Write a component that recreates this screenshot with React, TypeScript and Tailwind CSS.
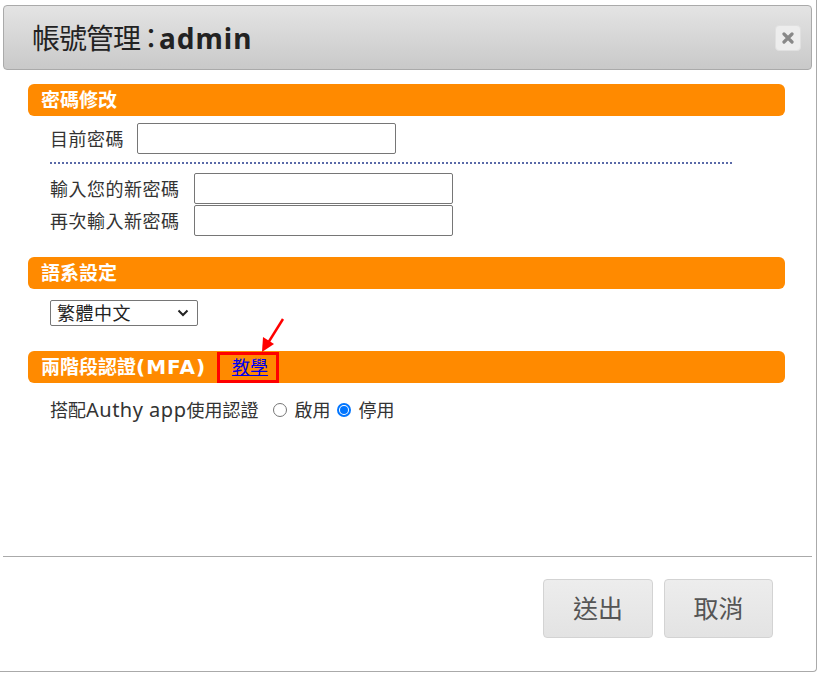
import React from "react";

const font = { fontFamily: '"Noto Sans", "Noto Sans CJK TC", sans-serif' };

function Bar({ children }: { children: React.ReactNode }) {
  return (
    <div className="flex h-[32px] w-[757px] items-center rounded-[6px] bg-[#ff8a00] pl-[13px] text-[19px] font-bold leading-none text-white">
      {children}
    </div>
  );
}

function Field() {
  return <div className="h-[31px] w-[259px] rounded-[2px] border border-[#767676] bg-white" />;
}

export default function App() {
  return (
    <div className="relative h-[673px] w-[818px] bg-white text-[#333]" style={font}>
      <div className="flex h-[672px] w-[817px] flex-col rounded-br-[4px] border-r border-b border-[#aaa]">
        {/* title bar */}
        <div className="ml-[3px] mt-[5px] flex h-[65px] w-[809px] items-center justify-between rounded-[4px] border border-[#aaa] bg-gradient-to-b from-[#e4e4e4] to-[#c9c9c9] pl-[28px] pr-[10px]">
          <div className="flex items-center text-[28px] leading-none text-[#222]">
            <span className="tracking-[-1px]">帳號管理</span>
            <span className="-ml-[3px] tracking-[-6px]">：</span>
            <span className="font-bold tracking-[1px]">admin</span>
          </div>
          <div className="flex h-[26px] w-[26px] items-center justify-center rounded-[4px] border border-[#e0e0e0] bg-[#ededed]">
            <svg width="12" height="12" viewBox="0 0 12 12">
              <path d="M2 2 L10 10 M10 2 L2 10" stroke="#888" strokeWidth="3.2" strokeLinecap="round" />
            </svg>
          </div>
        </div>

        {/* content */}
        <div className="flex h-[486px] flex-col pl-[28px] pt-[14px] text-[18px] leading-none">
          <Bar>密碼修改</Bar>
          <div className="mt-[7px] flex items-center pl-[22px]">
            <span className="w-[87px] tracking-[0.5px]">目前密碼</span>
            <Field />
          </div>
          <div className="ml-[22px] mt-[8px] h-[2px] w-[682px] border-t-2 border-dotted border-[#5a6aa8]" />
          <div className="mt-[9px] flex items-center pl-[22px]">
            <span className="w-[144px] tracking-[0.5px]">輸入您的新密碼</span>
            <Field />
          </div>
          <div className="mt-[1px] flex items-center pl-[22px]">
            <span className="w-[144px] tracking-[0.5px]">再次輸入新密碼</span>
            <Field />
          </div>

          <div className="mt-[21px]">
            <Bar>語系設定</Bar>
          </div>
          <div className="mt-[11px] pl-[22px]">
            <div className="flex h-[26px] w-[148px] items-center justify-between rounded-[2px] border border-[#767676] pl-[6px] pr-[8px] text-[#222]">
              <span className="tracking-[0.5px]">繁體中文</span>
              <svg width="12" height="8" viewBox="0 0 12 8">
                <path d="M1.5 1.5 L6 6 L10.5 1.5" stroke="#222" strokeWidth="2" fill="none" />
              </svg>
            </div>
          </div>

          <div className="mt-[25px]">
            <Bar>
              <span>兩階段認證</span>
              <span className="text-[20px] tracking-[1px]" style={{ fontFamily: '"DejaVu Sans", sans-serif' }}>
                (MFA)
              </span>
              <span className="ml-[11px] flex h-[31px] items-center border-[3px] border-[#ff0000] pl-[12px] pr-[8px] text-[18px] font-normal text-[#0000ee] underline">
                教學
              </span>
            </Bar>
          </div>
          <div className="mt-[17px] flex items-center pl-[22px]">
            <span>搭配</span>
            <span className="text-[20px] tracking-[0.5px]">Authy app</span>
            <span>使用認證</span>
            <span className="ml-[15px] inline-block h-[14px] w-[14px] rounded-full border border-[#767676] bg-white" />
            <span className="ml-[7px]">啟用</span>
            <span className="ml-[7px] flex h-[14px] w-[14px] items-center justify-center rounded-full border-[2px] border-[#0075ff] bg-white">
              <span className="h-[8px] w-[8px] rounded-full bg-[#0075ff]" />
            </span>
            <span className="ml-[7px]">停用</span>
          </div>
        </div>

        {/* footer */}
        <div className="ml-[3px] h-[1px] w-[809px] bg-[#aaa]" />
        <div className="flex justify-end gap-[11px] pr-[43px] pt-[22px]">
          <button className="h-[59px] w-[110px] rounded-[4px] border border-[#d3d3d3] bg-gradient-to-b from-[#ededed] to-[#e3e3e3] text-[25px] text-[#555]">
            送出
          </button>
          <button className="h-[59px] w-[109px] rounded-[4px] border border-[#d3d3d3] bg-gradient-to-b from-[#ededed] to-[#e3e3e3] text-[25px] text-[#555]">
            取消
          </button>
        </div>
      </div>

      {/* red arrow annotation */}
      <svg className="absolute left-[250px] top-[315px]" width="40" height="42" viewBox="0 0 40 42">
        <line x1="33" y1="4" x2="18" y2="28" stroke="#ff0000" strokeWidth="2.5" />
        <polygon points="12,37 13,22 24,29" fill="#ff0000" />
      </svg>
    </div>
  );
}
